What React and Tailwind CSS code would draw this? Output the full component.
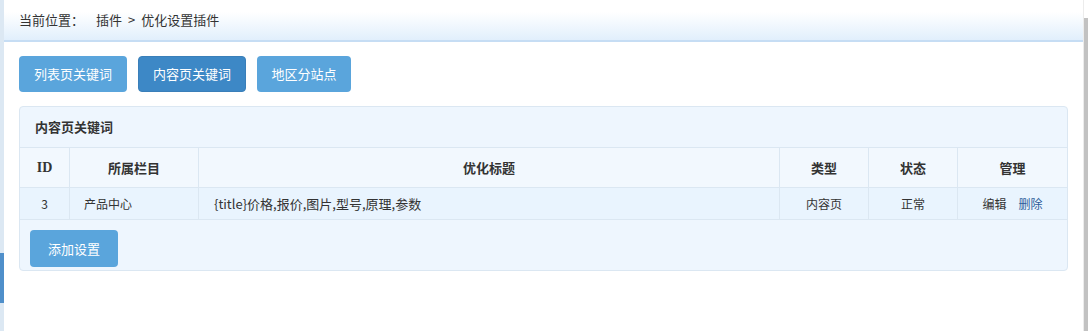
import React from 'react';

const tabs = [
  { label: '列表页关键词', active: false, w: 'w-[108px]' },
  { label: '内容页关键词', active: true, w: 'w-[108px]' },
  { label: '地区分站点', active: false, w: 'w-[94px]' },
];

const cols = [
  { title: 'ID', w: 'w-[49px]' },
  { title: '所属栏目', w: 'w-[129px]' },
  { title: '优化标题', w: 'flex-1' },
  { title: '类型', w: 'w-[89px]' },
  { title: '状态', w: 'w-[89px]' },
  { title: '管理', w: 'w-[110px]' },
];

export default function App() {
  return (
    <div className="flex h-[331px] w-[1088px] bg-white text-[#333] font-['Noto_Sans_CJK_SC',sans-serif]">
      {/* left frame edge */}
      <div className="flex w-[4px] flex-col bg-[#dce8f3]">
        <div className="h-[253px]" />
        <div className="h-[50px] bg-[#4f8fca]" />
      </div>

      <div className="flex flex-1 flex-col">
        <div className="flex h-[42px] items-center border-b-2 border-[#c6ddf4] bg-gradient-to-b from-white from-30% to-[#e1effc] pl-[15px] text-[13px]">
          <span>当前位置：</span>
          <span className="ml-[12px]">插件</span>
          <span className="mx-[6px]">&gt;</span>
          <span>优化设置插件</span>
        </div>

        <div className="flex gap-[11px] px-[15px] pt-[14px]">
          {tabs.map(t => (
            <div
              key={t.label}
              className={`${t.w} flex h-[36px] items-center justify-center rounded-[4px] text-[13px] text-white ${t.active ? 'border border-[#3a7fb9] bg-[#3d88c6]' : 'bg-[#5aa5dc]'}`}
            >
              {t.label}
            </div>
          ))}
        </div>

        <div className="mx-[15px] mt-[14px] rounded-[4px] border border-[#dbe7f2] bg-[#eef6fe]">
          <div className="flex h-[40px] items-center pl-[15px] text-[13px] font-bold">内容页关键词</div>

          <div className="flex h-[40px] border-t border-[#dbe7f2] bg-[#f2f8fe] text-[13px] font-bold">
            {cols.map((c, i) => (
              <div
                key={c.title}
                className={`${c.w} flex items-center justify-center ${i > 0 ? 'border-l border-[#dbe7f2]' : ''} ${c.title === 'ID' ? "font-['Liberation_Serif',serif] text-[14px]" : ''}`}
              >
                {c.title}
              </div>
            ))}
          </div>

          <div className="flex h-[33px] border-y border-[#dbe7f2] bg-[#e9f4fe] text-[12px]">
            <div className="flex w-[49px] items-center justify-center">3</div>
            <div className="flex w-[129px] items-center border-l border-[#dbe7f2] pl-[14px]">产品中心</div>
            <div className="flex flex-1 items-center border-l border-[#dbe7f2] pl-[15px] text-[13px]">{'{title}价格,报价,图片,型号,原理,参数'}</div>
            <div className="flex w-[89px] items-center justify-center border-l border-[#dbe7f2]">内容页</div>
            <div className="flex w-[89px] items-center justify-center border-l border-[#dbe7f2]">正常</div>
            <div className="flex w-[110px] items-center justify-center gap-[12px] border-l border-[#dbe7f2]">
              <span>编辑</span>
              <span className="text-[#2d5d9a]">删除</span>
            </div>
          </div>

          <div className="px-[10px] pb-[3px] pt-[10px]">
            <div className="flex h-[37px] w-[88px] items-center justify-center rounded-[4px] bg-[#5aa5dc] text-[13px] text-white">
              添加设置
            </div>
          </div>
        </div>
      </div>

      {/* scrollbar */}
      <div className="flex w-[5px] flex-col border-l border-[#ececec] bg-[#f3f3f3]">
        <div className="h-[18px] bg-white" />
        <div className="flex-1 bg-[#c2c2c2]" />
      </div>
    </div>
  );
}
